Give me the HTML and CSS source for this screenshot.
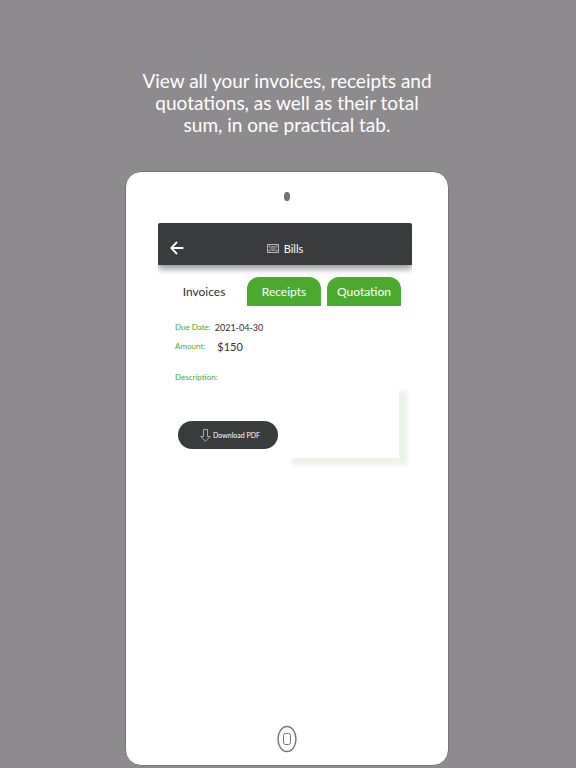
FILE: index.html
```html
<!DOCTYPE html>
<html lang="en">

<head>
  <meta charset="UTF-8">
  <meta name="viewport" content="width=device-width, initial-scale=1.0">
  <title>Bills</title>
  <link rel="stylesheet" href="styles.css">
</head>

<body>
  <h1 class="headline">View all your invoices, receipts and<br>quotations, as well as their total<br>sum, in one practical tab.</h1>
  <div class="tablet">
    <div class="camera"></div>
    <main class="screen">
      <header class="bar">
        <button class="back" aria-label="Back">
          <svg width="14" height="14" viewBox="0 0 14 14" fill="none" stroke="#fff" stroke-width="1.8">
            <path d="M13.5 7H1.5M7 1L1.2 7L7 13" />
          </svg>
        </button>
        <h2 class="title">
          <svg width="12" height="9" viewBox="0 0 12 9" fill="none" stroke="#b4b4b4">
            <rect x="0.5" y="0.5" width="11" height="8" />
            <ellipse cx="6" cy="4.5" rx="2.2" ry="2" />
            <path d="M2 3.5V2H3.5M8.5 2H10V3.5M10 5.5V7H8.5M3.5 7H2V5.5M6 3.5V5.5" />
          </svg>
          Bills
        </h2>
      </header>
      <nav class="tabs">
        <button class="tab on">Invoices</button>
        <button class="tab">Receipts</button>
        <button class="tab">Quotation</button>
      </nav>
      <section class="invoice">
        <dl>
          <div class="row">
            <dt>Due Date:</dt>
            <dd>2021-04-30</dd>
          </div>
          <div class="row amount">
            <dt>Amount:</dt>
            <dd>$150</dd>
          </div>
          <div class="row desc">
            <dt>Description:</dt>
            <dd></dd>
          </div>
        </dl>
        <button class="download">
          <svg width="11" height="13" viewBox="0 0 11 13" fill="none" stroke="#b8b8b8" stroke-width="0.9">
            <path d="M3.5 0.5H7.5V7.5H10.3L5.5 12.3L0.7 7.5H3.5Z" />
          </svg>
          Download PDF
        </button>
      </section>
    </main>
    <button class="home" aria-label="Home">
      <svg width="20" height="28" viewBox="0 0 20 28" fill="none" stroke="#747276">
        <ellipse cx="10" cy="14" rx="9" ry="12.5" stroke-width="1.4" />
        <rect x="6.5" y="8.5" width="7" height="11" rx="2" />
      </svg>
    </button>
  </div>
</body>

</html>
```

FILE: styles.css
```css
* {
  box-sizing: border-box;
  padding: 0;
  margin: 0;
}

body {
  min-height: 100vh;
  display: flex;
  flex-direction: column;
  align-items: center;
  padding: 70px 2px 2px 0;
  background: #8d8b8e;
  color: #303032;
  font-family: Lato, "Liberation Sans", sans-serif;
}

button {
  border: none;
  background: none;
  font-family: inherit;
  cursor: pointer;
}

svg {
  display: block;
}

.headline {
  color: #fff;
  font-size: 19px;
  font-weight: 400;
  line-height: 22px;
  text-align: center;
}

.tablet {
  width: 56.25%;
  min-width: 324px;
  flex: 1;
  display: flex;
  flex-direction: column;
  margin-top: 35px;
  padding: 20px 32px 12px;
  background: #fff;
  border: 1px solid #77757a;
  border-radius: 16px;
}

.camera {
  width: 6px;
  height: 9px;
  margin: 0 auto 22px;
  background: #77757a;
  border: 1px solid #69676b;
  border-radius: 50%;
}

.screen {
  flex: 1;
  margin-right: 4px;
  overflow: hidden;
}

.bar {
  height: 42px;
  display: grid;
  grid-template-columns: 40px 1fr 40px;
  align-items: center;
  padding-top: 8px;
  background: #3a3b3d;
  border-radius: 2px 2px 0 0;
  box-shadow: 0 4px 6px rgba(0, 0, 0, .4);
}

.back {
  padding-left: 12px;
}

.title {
  display: flex;
  align-items: center;
  justify-content: center;
  gap: 5px;
  color: #fff;
  font-size: 11px;
  font-weight: 400;
}

.tabs {
  display: grid;
  grid-template-columns: 1fr 1fr 1fr;
  gap: 6px;
  padding: 12px 11px 0 9px;
}

.tab {
  height: 29px;
  background: #4bab2e;
  border-radius: 12px 12px 0 0;
  color: #fff;
  font-size: 12px;
}

.tab.on {
  background: none;
  color: #303032;
}

.invoice {
  position: relative;
  z-index: 0;
  margin: 0 13px 0 9px;
  padding: 14px 8px 9px;
}

/* soft card edge, only in the bottom right corner */
.invoice::after {
  content: "";
  position: absolute;
  right: 0;
  bottom: 0;
  z-index: -1;
  width: 116px;
  height: 74px;
  background: #fff;
  box-shadow: 8px 7px 5px #ebf2e9;
}

.row {
  display: flex;
  align-items: center;
  gap: 4px;
  height: 14px;
  font-size: 9px;
}

.row dt {
  color: #4bab2e;
  font-size: 8px;
}

.amount {
  gap: 12px;
  margin-top: 5px;
  font-size: 11px;
}

.desc {
  margin-top: 17px;
}

.download {
  width: 100px;
  height: 28px;
  display: flex;
  align-items: center;
  justify-content: center;
  gap: 2px;
  margin: 37px 0 0 3px;
  padding-left: 4px;
  background: #3a3b3d;
  border-radius: 14px;
  color: #fff;
  font-size: 7px;
}

.home {
  align-self: center;
}
```
